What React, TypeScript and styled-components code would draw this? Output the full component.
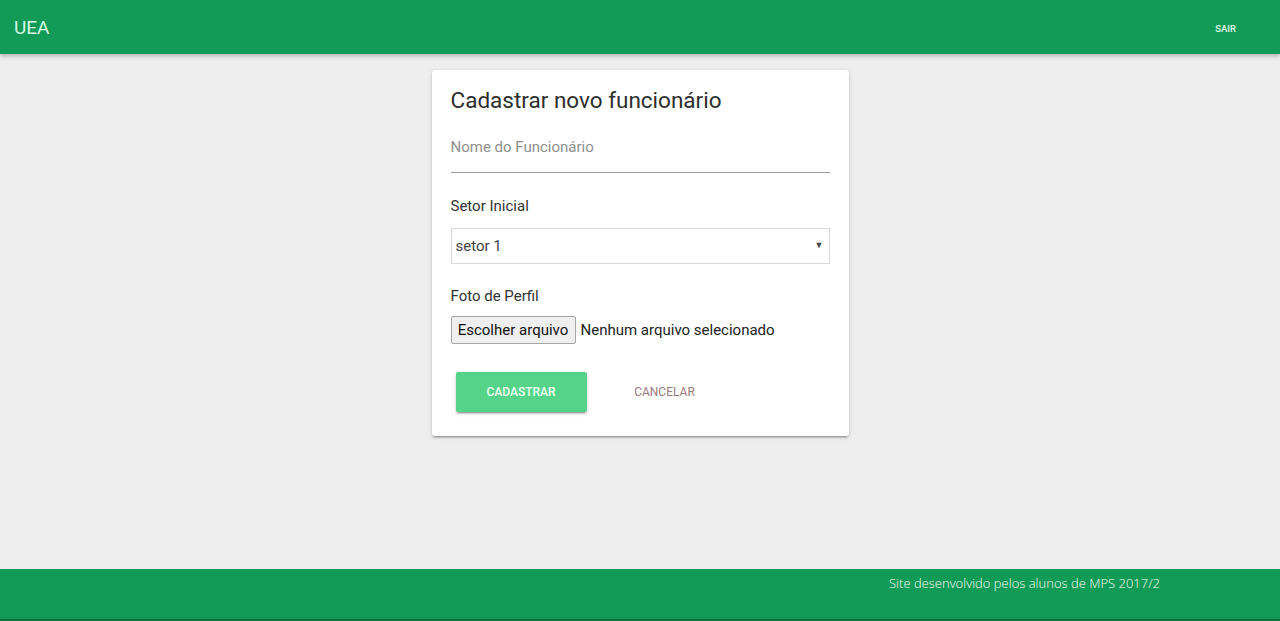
import React from "react";
import styled, { createGlobalStyle } from "styled-components";

const Global = createGlobalStyle`
  html, body { margin: 0; padding: 0; background: #eeeeee; }
  body { font-family: Roboto, "Liberation Sans", Arial, sans-serif; }
  * { box-sizing: border-box; }
`;

const Page = styled.div`
  display: flex;
  flex-direction: column;
  min-height: 621px;
  height: 621px;
`;

const Header = styled.header`
  height: 54px;
  background: #129a57;
  display: flex;
  align-items: center;
  justify-content: space-between;
  padding: 0 44px 0 14px;
  box-shadow: 0 2px 4px rgba(0, 0, 0, 0.25);
  position: relative;
  z-index: 1;
`;

const Brand = styled.div`
  color: #d6f7e4;
  font-size: 19px;
  font-weight: 400;
`;

const NavLink = styled.a`
  color: #e4fbee;
  font-size: 9.5px;
  font-weight: 500;
  text-transform: uppercase;
  text-decoration: none;
  margin-top: 2px;
`;

const Main = styled.main`
  flex: 1;
  display: flex;
  justify-content: center;
  align-items: flex-start;
  padding-top: 16px;
`;

const Card = styled.div`
  width: 417px;
  background: #ffffff;
  border-radius: 3px;
  box-shadow: 0 2px 2px 0 rgba(0, 0, 0, 0.14), 0 1px 5px 0 rgba(0, 0, 0, 0.12),
    0 3px 1px -2px rgba(0, 0, 0, 0.2);
  padding: 16px 19px 24px 19px;
  display: flex;
  flex-direction: column;
`;

const Title = styled.h1`
  margin: 0;
  font-size: 22.5px;
  line-height: 28px;
  font-weight: 400;
  color: #2e2e2e;
`;

const TextInput = styled.input`
  margin-top: 13px;
  height: 46px;
  width: 100%;
  border: none;
  border-bottom: 1px solid #9e9e9e;
  outline: none;
  font-family: Roboto, "Liberation Sans", Arial, sans-serif;
  font-size: 15px;
  padding: 0 0 6px 0;
  color: #333;
  background: transparent;
  &::placeholder { color: #8f8f8f; }
`;

const Label = styled.div<{ $gap: number }>`
  margin-top: ${(p) => p.$gap}px;
  font-size: 15px;
  line-height: 20px;
  color: #333;
`;

const SelectBox = styled.div`
  margin-top: 12px;
  height: 36px;
  border: 1px solid #dadada;
  display: flex;
  align-items: center;
  justify-content: space-between;
  padding: 0 5px 0 4px;
  font-size: 15px;
  color: #444;
`;

const Arrow = styled.span`
  font-size: 9px;
  color: #444;
  margin-top: -2px;
`;

const FileRow = styled.div`
  margin-top: 10px;
  display: flex;
  align-items: center;
  gap: 5px;
  font-size: 15px;
  color: #222;
`;

const FileButton = styled.button`
  height: 28px;
  width: 125px;
  padding: 0;
  background: #efefef;
  border: 1px solid #a6a6a6;
  border-radius: 2px;
  font-family: Roboto, "Liberation Sans", Arial, sans-serif;
  font-size: 15px;
  color: #111;
`;

const Actions = styled.div`
  margin-top: 28px;
  padding-left: 5px;
  display: flex;
  align-items: center;
`;

const PrimaryButton = styled.button`
  width: 131px;
  height: 40px;
  border: none;
  border-radius: 2px;
  background: #55d489;
  color: #f4fff8;
  font-family: Roboto, "Liberation Sans", Arial, sans-serif;
  font-size: 12px;
  font-weight: 500;
  text-transform: uppercase;
  box-shadow: 0 2px 2px 0 rgba(0, 0, 0, 0.14), 0 1px 5px 0 rgba(0, 0, 0, 0.12),
    0 3px 1px -2px rgba(0, 0, 0, 0.2);
`;

const FlatButton = styled.button`
  width: 156px;
  height: 40px;
  border: none;
  background: transparent;
  color: #9a7a80;
  font-family: Roboto, "Liberation Sans", Arial, sans-serif;
  font-size: 12px;
  text-transform: uppercase;
`;

const Footer = styled.footer`
  height: 52px;
  background: #129a57;
  border-bottom: 2px solid #0b6e3d;
  padding: 5px 0 0 889px;
`;

const FooterText = styled.div`
  font-family: "Open Sans", "Noto Sans", sans-serif;
  font-weight: 300;
  font-size: 13px;
  color: #f2fcf6;
  line-height: 18px;
`;

export default function App() {
  return (
    <Page>
      <Global />
      <Header>
        <Brand>UEA</Brand>
        <NavLink href="#">Sair</NavLink>
      </Header>
      <Main>
        <Card>
          <Title>Cadastrar novo funcionário</Title>
          <TextInput placeholder="Nome do Funcionário" />
          <Label $gap={23}>Setor Inicial</Label>
          <SelectBox>
            <span>setor 1</span>
            <Arrow>▼</Arrow>
          </SelectBox>
          <Label $gap={22}>Foto de Perfil</Label>
          <FileRow>
            <FileButton>Escolher arquivo</FileButton>
            <span>Nenhum arquivo selecionado</span>
          </FileRow>
          <Actions>
            <PrimaryButton>Cadastrar</PrimaryButton>
            <FlatButton>Cancelar</FlatButton>
          </Actions>
        </Card>
      </Main>
      <Footer>
        <FooterText>Site desenvolvido pelos alunos de MPS 2017/2</FooterText>
      </Footer>
    </Page>
  );
}
